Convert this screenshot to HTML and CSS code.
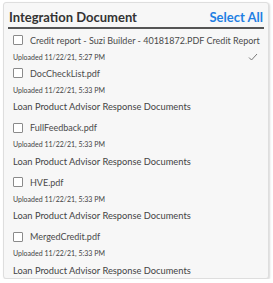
FILE: index.html
```html
<!DOCTYPE html>
<html>
<head>
<meta charset="utf-8">
<link rel="stylesheet" href="styles.css">
</head>
<body>
<div class="card">
  <div class="header">
    <span class="title">Integration Document</span>
    <span class="select-all">Select All</span>
  </div>
  <div class="list">
    <div class="item first">
      <div class="name-row"><span class="box"></span><span class="name">Credit report - Suzi Builder - 40181872.PDF Credit Report</span></div>
      <div class="meta-row"><span class="meta">Uploaded 11/22/21, 5:27 PM</span>
        <svg class="check" width="10" height="8" viewBox="0 0 10 8"><path d="M1 4.5 L3.5 7 L9 1" fill="none" stroke="#777" stroke-width="1"/></svg>
      </div>
    </div>
    <div class="item">
      <div class="name-row"><span class="box"></span><span class="name">DocCheckList.pdf</span></div>
      <div class="meta-row"><span class="meta">Uploaded 11/22/21, 5:33 PM</span></div>
      <div class="cat">Loan Product Advisor Response Documents</div>
    </div>
    <div class="item">
      <div class="name-row"><span class="box"></span><span class="name">FullFeedback.pdf</span></div>
      <div class="meta-row"><span class="meta">Uploaded 11/22/21, 5:33 PM</span></div>
      <div class="cat">Loan Product Advisor Response Documents</div>
    </div>
    <div class="item">
      <div class="name-row"><span class="box"></span><span class="name">HVE.pdf</span></div>
      <div class="meta-row"><span class="meta">Uploaded 11/22/21, 5:33 PM</span></div>
      <div class="cat">Loan Product Advisor Response Documents</div>
    </div>
    <div class="item">
      <div class="name-row"><span class="box"></span><span class="name">MergedCredit.pdf</span></div>
      <div class="meta-row"><span class="meta">Uploaded 11/22/21, 5:33 PM</span></div>
      <div class="cat">Loan Product Advisor Response Documents</div>
    </div>
  </div>
</div>
</body>
</html>
```

FILE: styles.css
```css
html, body {
  margin: 0;
  padding: 0;
  background: #ffffff;
}
body {
  font-family: Lato, "Liberation Sans", sans-serif;
  color: #444;
}
.card {
  box-sizing: border-box;
  margin: 2px 0 0 3px;
  width: 266px;
  height: 277px;
  background: #f7f7f7;
  border: 1px solid #dedede;
  border-radius: 3px;
  box-shadow: 1px 1px 2px rgba(0,0,0,0.15);
  padding: 0 4px 0 4px;
}
.header {
  display: flex;
  justify-content: space-between;
  align-items: flex-end;
  height: 24px;
  border-bottom: 2px solid #555;
  padding: 0 1px 0 1px;
}
.title {
  font-size: 13px;
  font-weight: 700;
  color: #333;
  line-height: 18px;
  margin-bottom: 1px;
}
.select-all {
  font-size: 13px;
  font-weight: 700;
  color: #1f7fe3;
  line-height: 18px;
  margin-bottom: 1px;
}
.list {
  padding-top: 3px;
}
.item {
  padding: 0 0 0 5px;
}
.item:not(.first) {
  padding-bottom: 4.5px;
}
.name-row {
  display: flex;
  align-items: center;
  height: 16px;
}
.box {
  flex-shrink: 0;
  box-sizing: border-box;
  width: 10px;
  height: 10px;
  border: 1px solid #8a8a8a;
  border-radius: 1px;
  background: #fff;
  margin-left: 0;
  margin-right: 7px;
}
.name {
  font-size: 9px;
  color: #4a4a4a;
  white-space: nowrap;
}
.meta-row {
  display: flex;
  justify-content: space-between;
  align-items: center;
  height: 17px;
  padding-right: 6px;
}
.meta {
  font-size: 7px;
  color: #444;
}
.cat {
  height: 17px;
  line-height: 17px;
  font-size: 9.3px;
  color: #444;
}
```
